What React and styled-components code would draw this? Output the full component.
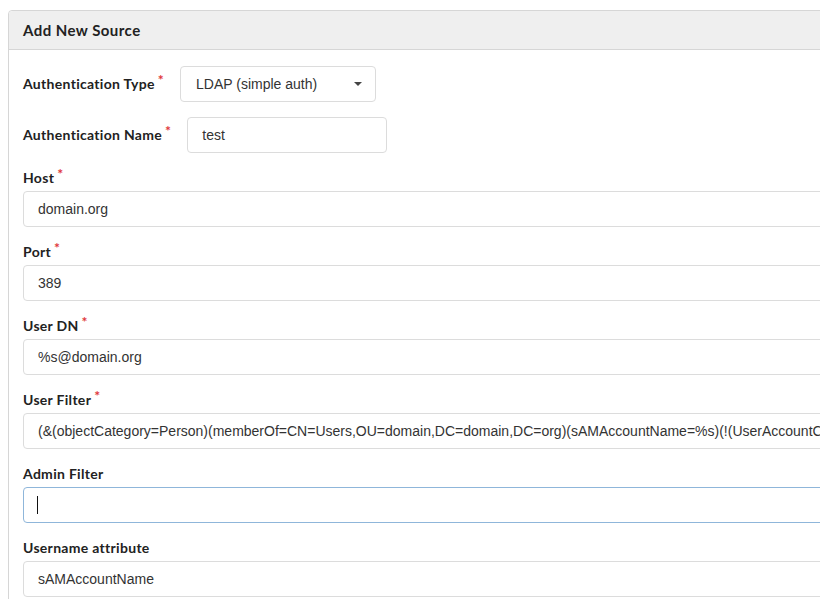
import React from "react";
import styled, { createGlobalStyle } from "styled-components";

const Global = createGlobalStyle`
  html, body { margin: 0; padding: 0; background: #fff; overflow: hidden; }
  body { font-family: "Liberation Sans", Arial, sans-serif; }
`;

const Page = styled.div`
  padding: 10px 0 0 8px;
  width: 1000px;
`;

const Panel = styled.section`
  border: 1px solid #d6d6d6;
  border-radius: 4px;
  background: #fff;
`;

const PanelHeader = styled.header`
  background: #efefef;
  border-bottom: 1px solid #d6d6d6;
  height: 39px;
  display: flex;
  align-items: center;
  padding: 0 14px;
  box-sizing: border-box;
  border-radius: 4px 4px 0 0;
`;

const Title = styled.h3`
  margin: 0;
  font-family: Lato, "Noto Sans", sans-serif;
  font-weight: 700;
  font-size: 15px;
  letter-spacing: 0.45px;
  color: #222;
`;

const Body = styled.div`
  padding: 16px 14px 15px;
  display: flex;
  flex-direction: column;
`;

const InlineRow = styled.div`
  display: flex;
  align-items: center;
  margin-bottom: 15px;
`;

const Group = styled.div`
  display: flex;
  flex-direction: column;
  margin-bottom: 15px;
`;

const Label = styled.label`
  display: block;
  font-family: Lato, "Noto Sans", sans-serif;
  font-weight: 700;
  font-size: 14px;
  letter-spacing: 0.3px;
  line-height: 20px;
  height: 20px;
  color: #222;
  margin-bottom: ${(p) => (p.$inline ? "0" : "3px")};
  margin-right: ${(p) => (p.$inline ? "16px" : "0")};
  white-space: nowrap;
`;

const Req = styled.span`
  display: inline-block;
  color: #e0363a;
  font-size: 14px;
  line-height: 10px;
  vertical-align: top;
  margin-left: 3px;
  position: relative;
  top: 1px;
`;

const Input = styled.input`
  box-sizing: border-box;
  display: block;
  height: 36px;
  width: ${(p) => p.$width || "100%"};
  padding: 0 14px;
  font-family: "Liberation Sans", Arial, sans-serif;
  font-size: 14px;
  color: #333;
  background: #fff;
  border: 1px solid ${(p) => (p.$focus ? "#8fb6da" : "#dcdcdc")};
  border-radius: 4px;
  outline: none;
  box-shadow: none;
`;

const SelectBox = styled.div`
  box-sizing: border-box;
  height: 36px;
  width: 196px;
  padding: 0 13px 0 15px;
  display: flex;
  align-items: center;
  justify-content: space-between;
  font-family: "Liberation Sans", Arial, sans-serif;
  font-size: 14px;
  color: #333;
  border: 1px solid #dcdcdc;
  border-radius: 4px;
`;

const Caret = styled.span`
  width: 0;
  height: 0;
  border-left: 4px solid transparent;
  border-right: 4px solid transparent;
  border-top: 4px solid #444;
`;

const Cursor = styled.span`
  position: absolute;
  left: 14px;
  top: 9px;
  width: 1px;
  height: 18px;
  background: #111;
`;

const FocusWrap = styled.div`
  position: relative;
`;

const Field = ({ label, required, value, focus }) => (
  <Group>
    <Label>
      {label}
      {required && <Req>*</Req>}
    </Label>
    {focus ? (
      <FocusWrap>
        <Input $focus defaultValue={value} readOnly />
        <Cursor />
      </FocusWrap>
    ) : (
      <Input defaultValue={value} readOnly />
    )}
  </Group>
);

export default function App() {
  return (
    <Page>
      <Global />
      <Panel>
        <PanelHeader>
          <Title>Add New Source</Title>
        </PanelHeader>
        <Body>
          <InlineRow>
            <Label $inline>
              Authentication Type<Req>*</Req>
            </Label>
            <SelectBox>
              <span>LDAP (simple auth)</span>
              <Caret />
            </SelectBox>
          </InlineRow>
          <InlineRow>
            <Label $inline>
              Authentication Name<Req>*</Req>
            </Label>
            <Input $width="200px" defaultValue="test" readOnly />
          </InlineRow>
          <Field label="Host" required value="domain.org" />
          <Field label="Port" required value="389" />
          <Field label="User DN" required value="%s@domain.org" />
          <Field
            label="User Filter"
            required
            value="(&(objectCategory=Person)(memberOf=CN=Users,OU=domain,DC=domain,DC=org)(sAMAccountName=%s)(!(UserAccountControl:1.2.840.113556.1.4.803:=2)))"
          />
          <Field label="Admin Filter" value="" focus />
          <Field label="Username attribute" value="sAMAccountName" />
        </Body>
      </Panel>
    </Page>
  );
}
